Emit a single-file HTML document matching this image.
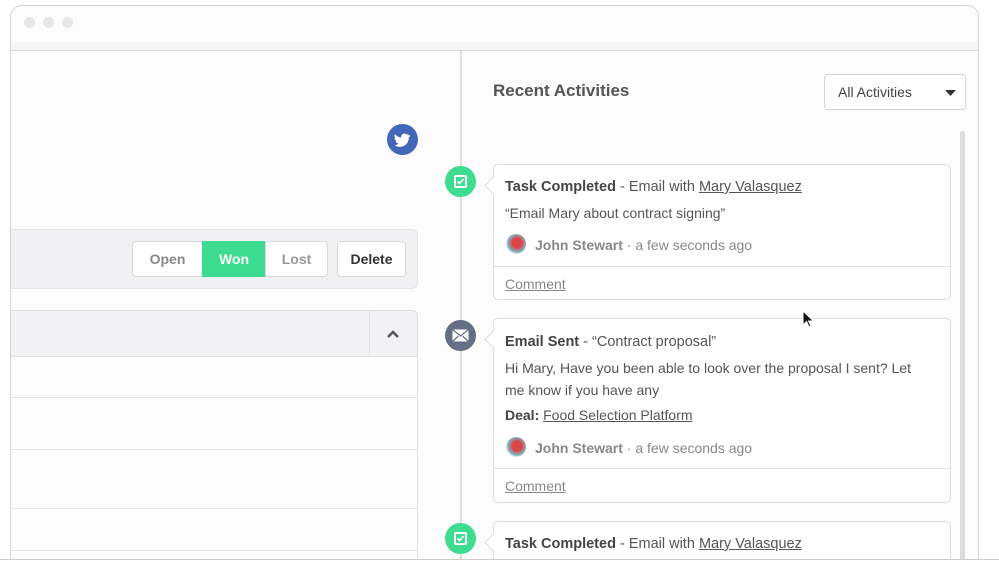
<!DOCTYPE html>
<html><head><style>
*{box-sizing:border-box;margin:0;padding:0}
html,body{width:999px;height:572px;overflow:hidden}
body{background:#fff;position:relative;font-family:"Liberation Sans",sans-serif;color:#4a4a4a}
#c{position:absolute;left:0;top:0;width:999px;height:572px;overflow:hidden}
.a{position:absolute}
.win{left:10px;top:5px;width:969px;height:560px;border:1px solid #d4d4d4;border-bottom:none;border-radius:12px 12px 0 0;background:#fcfcfc}
.dot{width:11px;height:11px;border-radius:50%;background:#e6e6e6}
.card{left:493px;width:458px;border:1px solid #dcdcdc;border-radius:5px;background:#fff}
.card:before{content:"";position:absolute;left:-7px;top:14px;width:12px;height:12px;background:#fff;border-left:1px solid #dcdcdc;border-bottom:1px solid #dcdcdc;transform:rotate(45deg)}
.t{font-size:14.5px;color:#555}
.t b{color:#444}
.u{text-decoration:underline}
.meta{font-size:14px;color:#888}
.meta b{font-weight:bold;color:#888}
.av{width:20px;height:20px;border-radius:50%;background:radial-gradient(circle at 55% 45%,#d44 30%,#7bc 60%,#eee 70%)}
.ic{width:31px;height:31px;border-radius:50%;left:445px}
.btn{top:241px;height:36px;font-size:14px;display:flex;align-items:center;justify-content:center;border:1px solid #d8d8d8;background:#fff;font-weight:bold}
.rl{left:11px;width:406px;height:1px;background:#e6e6e6}
</style></head><body><div id="c">
<div class="a win"></div>
<div class="a dot" style="left:24px;top:17px"></div>
<div class="a dot" style="left:43px;top:17px"></div>
<div class="a dot" style="left:62px;top:17px"></div>
<div class="a" style="left:11px;top:42px;width:967px;height:9px;background:#f6f6f6;border-bottom:1px solid #d8d8d8"></div>

<div class="a" style="left:387px;top:124px;width:31px;height:31px;border-radius:50%;background:#4266b8"><svg width="31" height="31" viewBox="0 0 31 31"><path d="M22 11c-.6.3-1.2.4-1.8.5.7-.4 1.1-1 1.4-1.7-.6.4-1.3.6-2 .8a3.1 3.1 0 0 0-5.3 2.8c-2.6-.1-4.9-1.4-6.4-3.3-.9 1.5-.4 3.3 1 4.2-.5 0-1-.2-1.4-.4 0 1.5 1.1 2.8 2.5 3.1-.5.1-1 .2-1.4.1.4 1.3 1.6 2.2 2.9 2.2A6.2 6.2 0 0 1 8 21.5c1.4.9 3 1.4 4.8 1.4 5.8 0 9-4.8 9-9v-.4c.6-.5 1.1-1 1.5-1.6z" fill="#fff"/></svg></div>

<div class="a" style="left:11px;top:229px;width:407px;height:60px;background:#f1f0f2;border:1px solid #e4e4e4;border-left:none;border-radius:0 6px 6px 0"></div>
<div class="a btn" style="left:132px;width:71px;color:#888;border-radius:4px 0 0 4px">Open</div>
<div class="a btn" style="left:202px;width:64px;color:#fff;background:#3ddc91;border-color:#3ddc91">Won</div>
<div class="a btn" style="left:265px;width:63px;color:#999;border-radius:0 4px 4px 0">Lost</div>
<div class="a btn" style="left:337px;width:69px;color:#333;border-radius:4px">Delete</div>

<div class="a" style="left:11px;top:310px;width:407px;height:250px;background:#fdfdfd;border:1px solid #e0e0e0;border-left:none;border-bottom:none;border-radius:0 6px 0 0"></div>
<div class="a" style="left:11px;top:310px;width:407px;height:47px;background:#f2f1f3;border:1px solid #e0e0e0;border-left:none;border-radius:0 6px 0 0"></div>
<div class="a" style="left:369px;top:311px;width:1px;height:45px;background:#e2e2e2"></div>
<svg class="a" style="left:385px;top:328px" width="16" height="12"><path d="M3 9l5-5 5 5" stroke="#555" stroke-width="2.5" fill="none"/></svg>
<div class="a rl" style="top:397px"></div>
<div class="a rl" style="top:449px"></div>
<div class="a rl" style="top:508px"></div>
<div class="a rl" style="top:550px"></div>

<div class="a" style="left:460px;top:51px;width:2px;height:509px;background:#dedede"></div>
<div class="a" style="left:493px;top:81px;font-size:17px;font-weight:bold;color:#555">Recent Activities</div>
<div class="a" style="left:824px;top:74px;width:142px;height:36px;border:1px solid #d4d4d4;border-radius:4px;background:#fff;font-size:14px;color:#444;padding:9px 0 0 13px">All Activities<svg class="a" style="right:8px;top:15px" width="12" height="7"><path d="M0 0h11l-5.5 6z" fill="#333"/></svg></div>
<div class="a" style="left:960px;top:131px;width:5px;height:429px;background:#ddd;border-radius:3px 3px 0 0"></div>

<div class="a ic" style="top:166px;background:#3ddc91"><div class="a" style="left:9px;top:9px;width:13px;height:13px;border:2px solid #fff;border-radius:2px"></div><svg class="a" style="left:11px;top:11px" width="9" height="9"><path d="M1.5 4.5l2 2 4-4.5" stroke="#fff" stroke-width="1.6" fill="none"/></svg></div>
<div class="a card" style="top:164px;height:136px">
<div class="a t" style="left:11px;top:14px"><b>Task Completed</b> - Email with <span class="u">Mary Valasquez</span></div>
<div class="a t" style="left:11px;top:40px;font-size:14px">“Email Mary about contract signing”</div>
<div class="a av" style="left:12px;top:69px"></div>
<div class="a meta" style="left:41px;top:72px"><b>John Stewart</b> · a few seconds ago</div>
<div class="a" style="left:0;top:101px;width:456px;height:1px;background:#e2e2e2"></div>
<div class="a meta u" style="left:11px;top:111px">Comment</div>
</div>

<div class="a ic" style="top:320px;background:#646e84"><svg class="a" style="left:7px;top:9px" width="17" height="13"><rect x=".5" y=".5" width="16" height="12" fill="#fff"/><path d="M.5 .5l8 6.5 8-6.5M.5 12.5l6-5.5M16.5 12.5l-6-5.5" stroke="#646e84" stroke-width="1.2" fill="none"/></svg></div>
<div class="a card" style="top:318px;height:185px">
<div class="a t" style="left:11px;top:15px"><b>Email Sent</b> - “Contract proposal”</div>
<div class="a t" style="left:11px;top:38px;font-size:14px;line-height:22px;width:425px">Hi Mary, Have you been able to look over the proposal I sent? Let me know if you have any</div>
<div class="a t" style="left:11px;top:88px;font-size:14px"><b>Deal:</b> <span class="u">Food Selection Platform</span></div>
<div class="a av" style="left:12px;top:118px"></div>
<div class="a meta" style="left:41px;top:121px"><b>John Stewart</b> · a few seconds ago</div>
<div class="a" style="left:0;top:149px;width:456px;height:1px;background:#e2e2e2"></div>
<div class="a meta u" style="left:11px;top:159px">Comment</div>
</div>

<div class="a ic" style="top:523px;background:#3ddc91"><div class="a" style="left:9px;top:9px;width:13px;height:13px;border:2px solid #fff;border-radius:2px"></div><svg class="a" style="left:11px;top:11px" width="9" height="9"><path d="M1.5 4.5l2 2 4-4.5" stroke="#fff" stroke-width="1.6" fill="none"/></svg></div>
<div class="a card" style="top:521px;height:39px;border-bottom:none;border-radius:5px 5px 0 0">
<div class="a t" style="left:11px;top:14px"><b>Task Completed</b> - Email with <span class="u">Mary Valasquez</span></div>
</div>
<div class="a" style="left:0;top:559px;width:999px;height:1px;background:#ccc"></div>
<div class="a" style="left:0;top:560px;width:999px;height:12px;background:#fff"></div>
<svg class="a" style="left:802px;top:310px" width="14" height="20"><path d="M1 1v14l3.5-3.5 2.5 5.5 2-1-2.5-5h5z" fill="#111" stroke="#fff" stroke-width="1"/></svg>
</div></body></html>
